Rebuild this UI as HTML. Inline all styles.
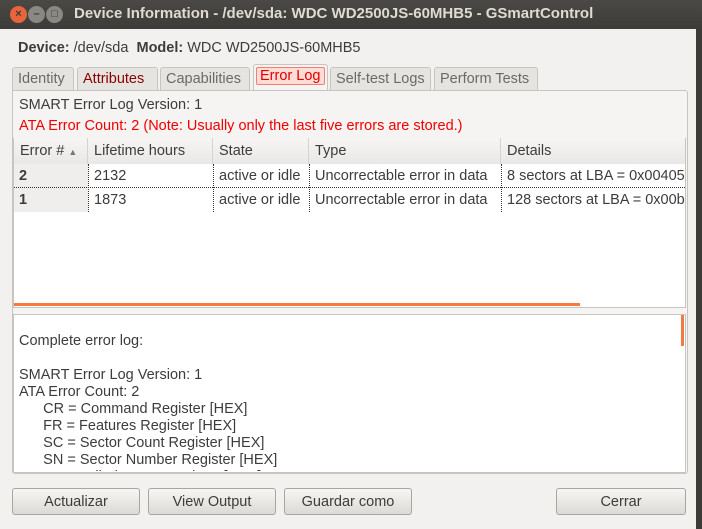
<!DOCTYPE html>
<html><head><style>
*{margin:0;padding:0;box-sizing:border-box}
body{width:702px;height:529px;background:#3c3b37;font-family:"Liberation Sans",sans-serif;font-size:14px;color:#3c3c3c;position:relative;overflow:hidden}
.a{position:absolute;white-space:nowrap}
#win{position:absolute;left:0;top:29px;width:696px;height:500px;background:#f2f1f0}
.tb{position:absolute;top:6px;width:17px;height:17px;border-radius:50%;font-size:11px;line-height:17px;text-align:center;color:#3c3b37;font-weight:bold}
.tab{position:absolute;top:67px;height:24px;border:1px solid #c8c5c0;border-bottom:none;border-radius:3px 3px 0 0;background:#e6e4e1;color:#6a6a6a;padding:3px 5px 0 5px;font-size:14.5px}
.col{position:absolute;top:138px;height:26px;border-right:1px solid #d6d3cf;padding:5px 6px;background:linear-gradient(#f6f5f4,#e9e8e6);font-size:14.5px}
.cell{position:absolute;padding:4px 5px;height:24px;font-size:14.5px}
.btn{position:absolute;top:488px;height:27px;border:1px solid #a9a59f;border-radius:3px;background:linear-gradient(#f7f6f5,#dcdad6);text-align:center;padding-top:5px;color:#3c3c3c;font-size:14.5px}
</style></head><body>
<div class="a" style="left:0;top:0;width:702px;height:29px;background:linear-gradient(#4a4945,#3c3b37)"></div>
<div class="tb" style="left:10px;background:#e8643a">×</div>
<div class="tb" style="left:28px;background:#8a8883">–</div>
<div class="tb" style="left:46px;background:#8a8883">□</div>
<div class="a" style="left:74px;top:5px;color:#dfdbd2;font-weight:bold;font-size:15px">Device Information - /dev/sda: WDC WD2500JS-60MHB5 - GSmartControl</div>
<div id="win"></div>
<div class="a" style="left:18px;top:40px;font-size:14.5px"><b>Device:</b> /dev/sda&nbsp; <b>Model:</b> WDC WD2500JS-60MHB5</div>
<div class="tab" style="left:12px;width:62px">Identity</div>
<div class="tab" style="left:77px;width:81px;color:#8a0000">Attributes</div>
<div class="tab" style="left:160px;width:90px">Capabilities</div>
<div class="tab" style="left:253px;width:75px;top:64px;height:27px;background:#f5f4f2;padding:2px 2px 0"><div style="background:#ffdcd6;border:1px solid #f08070;border-radius:2px;color:#e00000;padding:0 3px">Error Log</div></div>
<div class="tab" style="left:330px;width:101px">Self-test Logs</div>
<div class="tab" style="left:434px;width:104px">Perform Tests</div>
<div class="a" style="left:12px;top:90px;width:676px;height:384px;border:1px solid #c8c5c0;background:#f5f4f2;border-radius:0 3px 3px 3px"></div>
<div class="a" style="left:19px;top:97px;font-size:14.5px">SMART Error Log Version: 1</div>
<div class="a" style="left:19px;top:118px;color:#f00000;font-size:14.5px">ATA Error Count: 2 (Note: Usually only the last five errors are stored.)</div>
<div class="a" style="left:13px;top:138px;width:673px;height:170px;background:#fff;border:1px solid #c8c5c0;overflow:hidden"></div>
<div class="col" style="left:14px;width:74px">Error # <span style="font-size:9px;color:#777">▲</span></div>
<div class="col" style="left:88px;width:125px">Lifetime hours</div>
<div class="col" style="left:213px;width:96px">State</div>
<div class="col" style="left:309px;width:192px">Type</div>
<div class="col" style="left:501px;width:184px;border-right:none">Details</div>
<div class="a" style="left:14px;top:164px;width:74px;height:48px;background:#efeeed"></div>
<div class="a" style="left:14px;top:187px;width:671px;border-top:1px dotted #333"></div>
<div class="a" style="left:88px;top:164px;height:48px;border-left:1px dotted #333"></div>
<div class="a" style="left:213px;top:164px;height:48px;border-left:1px dotted #333"></div>
<div class="a" style="left:309px;top:164px;height:48px;border-left:1px dotted #333"></div>
<div class="a" style="left:501px;top:164px;height:48px;border-left:1px dotted #333"></div>
<div class="cell a" style="left:14px;top:164px;font-weight:bold">2</div>
<div class="cell a" style="left:89px;top:164px">2132</div>
<div class="cell a" style="left:214px;top:164px">active or idle</div>
<div class="cell a" style="left:310px;top:164px">Uncorrectable error in data</div>
<div class="cell a" style="left:502px;top:164px;width:183px;overflow:hidden">8 sectors at LBA = 0x00405</div>
<div class="cell a" style="left:14px;top:188px;font-weight:bold">1</div>
<div class="cell a" style="left:89px;top:188px">1873</div>
<div class="cell a" style="left:214px;top:188px">active or idle</div>
<div class="cell a" style="left:310px;top:188px">Uncorrectable error in data</div>
<div class="cell a" style="left:502px;top:188px;width:183px;overflow:hidden">128 sectors at LBA = 0x00b</div>
<div class="a" style="left:14px;top:303px;width:566px;height:3px;background:#f47a42"></div>
<div class="a" style="left:13px;top:314px;width:673px;height:159px;background:#fff;border:1px solid #c8c5c0"></div>
<div class="a" style="left:681px;top:315px;width:3px;height:31px;background:#f47a42"></div>
<div class="a" style="left:19px;top:333px;line-height:17px;height:138px;overflow:hidden;white-space:pre;font-size:14.5px">Complete error log:

SMART Error Log Version: 1
ATA Error Count: 2
      CR = Command Register [HEX]
      FR = Features Register [HEX]
      SC = Sector Count Register [HEX]
      SN = Sector Number Register [HEX]
      CL = Cylinder Low Register [HEX]</div>
<div class="btn" style="left:12px;width:128px">Actualizar</div>
<div class="btn" style="left:148px;width:128px">View Output</div>
<div class="btn" style="left:284px;width:128px">Guardar como</div>
<div class="btn" style="left:556px;width:130px">Cerrar</div>
</body></html>
